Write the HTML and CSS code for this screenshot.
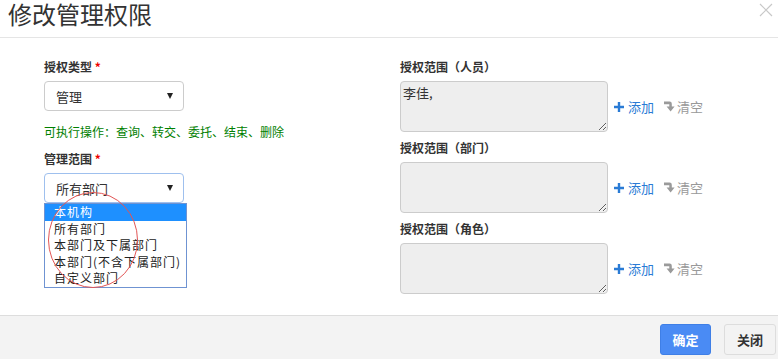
FILE: index.html
```html
<!DOCTYPE html>
<html lang="zh-CN">
<head>
  <meta charset="UTF-8">
  <title>修改管理权限</title>
  <link rel="stylesheet" href="styles.css">
</head>
<body>
  <div class="modal">
    <div class="modal-header">
      <h4 class="modal-title">修改管理权限</h4>
      <span class="close">
        <svg width="14" height="14" viewBox="0 0 14 14"><path d="M1 1L13 13M13 1L1 13" stroke="#c8c8c8" stroke-width="1.2" fill="none"/></svg>
      </span>
    </div>

    <div class="modal-body">
      <div class="col-left">
        <div class="form-label">授权类型 <span class="req">*</span></div>
        <div class="fake-select">
          <span>管理</span>
          <span class="caret"></span>
        </div>
        <div class="ops">可执行操作：查询、转交、委托、结束、删除</div>

        <div class="form-label label-gap">管理范围 <span class="req">*</span></div>
        <div class="select-wrap">
          <div class="fake-select focus">
            <span>所有部门</span>
            <span class="caret"></span>
          </div>
          <ul class="dropdown">
            <li class="active">本机构</li>
            <li>所有部门</li>
            <li>本部门及下属部门</li>
            <li>本部门(不含下属部门)</li>
            <li>自定义部门</li>
          </ul>
        </div>
      </div>

      <div class="col-right">
        <div class="scope">
          <div class="form-label">授权范围（人员）</div>
          <div class="scope-row">
            <textarea class="scope-box" readonly>李佳,</textarea>
            <a class="btn-add"><svg width="10" height="10" viewBox="0 0 10 10"><path d="M3.8 0h2.4v3.8H10v2.4H6.2V10H3.8V6.2H0V3.8h3.8z" fill="#2a7bd5"/></svg>添加</a>
            <a class="btn-clear"><svg width="11" height="11" viewBox="0 0 11 11"><path d="M0 0.5h5.6a2.2 2.2 0 0 1 2.2 2.2V5.6H10.6L6.6 10.5 2.6 5.6h2.7V3.2H0z" fill="#9a9a9a"/></svg>清空</a>
          </div>
        </div>
        <div class="scope">
          <div class="form-label">授权范围（部门）</div>
          <div class="scope-row">
            <textarea class="scope-box" readonly></textarea>
            <a class="btn-add"><svg width="10" height="10" viewBox="0 0 10 10"><path d="M3.8 0h2.4v3.8H10v2.4H6.2V10H3.8V6.2H0V3.8h3.8z" fill="#2a7bd5"/></svg>添加</a>
            <a class="btn-clear"><svg width="11" height="11" viewBox="0 0 11 11"><path d="M0 0.5h5.6a2.2 2.2 0 0 1 2.2 2.2V5.6H10.6L6.6 10.5 2.6 5.6h2.7V3.2H0z" fill="#9a9a9a"/></svg>清空</a>
          </div>
        </div>
        <div class="scope">
          <div class="form-label">授权范围（角色）</div>
          <div class="scope-row">
            <textarea class="scope-box" readonly></textarea>
            <a class="btn-add"><svg width="10" height="10" viewBox="0 0 10 10"><path d="M3.8 0h2.4v3.8H10v2.4H6.2V10H3.8V6.2H0V3.8h3.8z" fill="#2a7bd5"/></svg>添加</a>
            <a class="btn-clear"><svg width="11" height="11" viewBox="0 0 11 11"><path d="M0 0.5h5.6a2.2 2.2 0 0 1 2.2 2.2V5.6H10.6L6.6 10.5 2.6 5.6h2.7V3.2H0z" fill="#9a9a9a"/></svg>清空</a>
          </div>
        </div>
      </div>

      <!-- red annotation ring -->
      <svg class="mark" width="100" height="104" viewBox="0 0 100 104">
        <ellipse cx="50" cy="52" rx="44.5" ry="47.5" fill="none" stroke="#e25555" stroke-width="1"/>
      </svg>
    </div>

    <div class="modal-footer">
      <button class="btn btn-primary">确定</button>
      <button class="btn btn-default">关闭</button>
    </div>
  </div>
</body>
</html>
```

FILE: styles.css
```css
* {
  box-sizing: border-box;
}

body {
  margin: 0;
  background: #fff;
  color: #333;
  font-family: "Noto Sans CJK SC", "Liberation Sans", sans-serif;
  font-size: 12px;
}

.modal {
  width: 778px;
  height: 359px;
  overflow: hidden;
}

.modal-header {
  height: 38px;
  border-bottom: 1px solid #e5e5e5;
  display: flex;
  justify-content: space-between;
  align-items: flex-start;
  padding: 0 4px 0 8px;
}

.modal-title {
  margin: 0;
  font-size: 24px;
  font-weight: normal;
  line-height: 28px;
  color: #333;
}

.close {
  padding-top: 3px;
  padding-right: 1px;
}

.modal-body {
  position: relative;
  height: 277px;
  padding: 20px 0 0 44px;
  display: flex;
}

.col-left {
  width: 356px;
}

.form-label {
  font-weight: bold;
  font-size: 12px;
  line-height: 18px;
  color: #333;
}

.req {
  color: #e00;
}

.label-gap {
  margin-top: 9px;
}

.fake-select {
  width: 140px;
  height: 30px;
  margin-top: 5px;
  border: 1px solid #ccc;
  border-radius: 4px;
  padding: 0 10px 0 11px;
  display: flex;
  align-items: center;
  justify-content: space-between;
  font-size: 13px;
  background: #fff;
}

.fake-select.focus {
  border-color: #9fc0ee;
}

.caret {
  width: 0;
  height: 0;
  border-left: 3.5px solid transparent;
  border-right: 3.5px solid transparent;
  border-top: 6px solid #222;
}

.ops {
  margin-top: 12px;
  color: #008000;
  line-height: 18px;
}

.select-wrap {
  position: relative;
}

.dropdown {
  position: absolute;
  top: 30px;
  left: 0;
  width: 143px;
  margin: 0;
  padding: 0;
  list-style: none;
  border: 1px solid #6f93d2;
  background: #fff;
  font-size: 12px;
  letter-spacing: 1px;
  z-index: 5;
}

.dropdown li {
  height: 16.6px;
  line-height: 16.6px;
  padding-left: 9px;
  white-space: nowrap;
  color: #222;
}

.dropdown li.active {
  background: #1e90ff;
  color: #fff;
}

.col-right {
  display: flex;
  flex-direction: column;
}

.scope {
  height: 81px;
}

.scope-row {
  margin-top: 5px;
  display: flex;
  align-items: center;
}

.scope-box {
  width: 208px;
  height: 51px;
  margin: 0;
  padding: 2px 2px;
  border: 1px solid #ccc;
  border-radius: 4px;
  background: #eee;
  font-family: "Noto Sans CJK SC", "Liberation Sans", sans-serif;
  font-size: 13px;
  line-height: 17px;
  color: #333;
  resize: vertical;
}

.btn-add,
.btn-clear {
  display: flex;
  align-items: center;
  font-size: 13px;
  line-height: 18px;
  cursor: pointer;
}

.btn-add {
  margin-left: 6px;
  color: #2a7bd5;
}

.btn-add svg {
  margin-right: 4px;
}

.btn-clear {
  margin-left: 10px;
  color: #999;
}

.btn-clear svg {
  margin-right: 2px;
}

.mark {
  position: absolute;
  left: 43px;
  top: 150px;
  pointer-events: none;
  z-index: 6;
}

.modal-footer {
  height: 44px;
  border-top: 1px solid #ddd;
  background: #f3f3f3;
  display: flex;
  justify-content: flex-end;
  gap: 13px;
  padding: 8px 2px 0 0;
}

.btn {
  height: 31px;
  border-radius: 3px;
  font-family: "Noto Sans CJK SC", "Liberation Sans", sans-serif;
  font-size: 13px;
  font-weight: bold;
  padding: 0;
}

.btn-primary {
  width: 51px;
  background: #4a8bf4;
  border: 1px solid #3f7fe6;
  color: #fff;
}

.btn-default {
  width: 52px;
  background: #f3f3f3;
  border: 1px solid #ddd;
  color: #333;
}
```
